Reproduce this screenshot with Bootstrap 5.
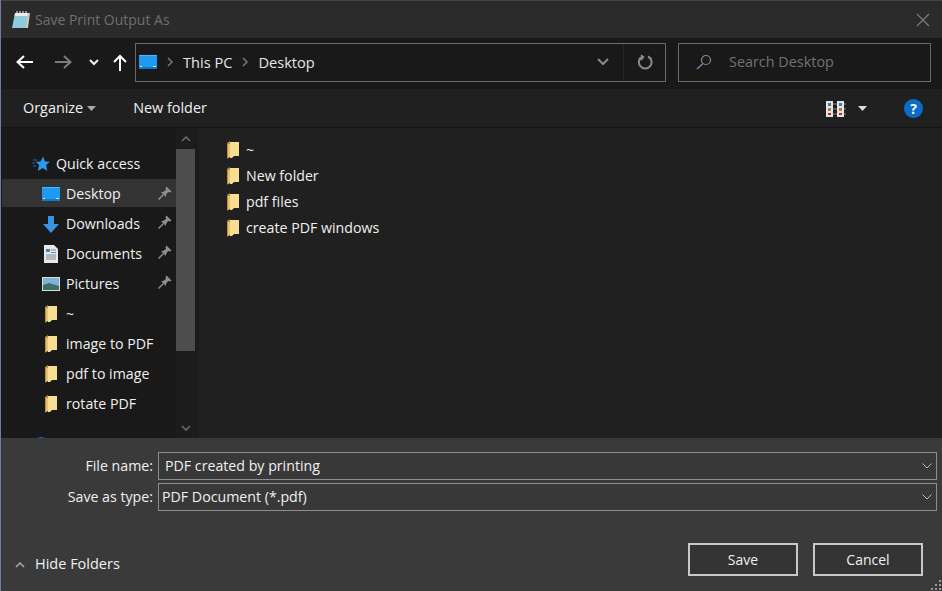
<!DOCTYPE html>
<html lang="en">
<head>
<meta charset="UTF-8">
<title>Save Print Output As</title>
<link href="https://cdn.jsdelivr.net/npm/bootstrap@5.3.3/dist/css/bootstrap.min.css" rel="stylesheet">
<style>
html, body { height: 591px; overflow: hidden; }
body { background: #3a3a3a; color: #f0f0f0; font-family: "Open Sans", "Noto Sans", sans-serif; font-size: 14.2px; line-height: 1; }
svg { display: block; flex: none; }
.dlg { height: 591px; border-left: 1px solid #6f7d9e; }
.titlebar { height: 38px; background: #2b2b2b; padding: 0 12px 0 10px; color: #6f6f6f; border-top: 1px solid #444; font-size: 14px; }
.addrbar { height: 51px; background: #191919; padding: 0 10px 3px 15px; }
.nav-fwd { margin-left: 22px; }
.nav-rec { margin-left: 17px; }
.nav-up { margin-left: 14px; }
.addrbox { width: 531px; height: 39px; margin-left: 8px; border: 1px solid #6a6a6a; padding-left: 3px; color: #e6e6e6; font-size: 14.6px; }
.crumbsep { margin: 0 9px 0 10px; }
.addrdrop { margin-right: 14px; }
.searchbox { width: 253px; height: 39px; margin-left: 12px; border: 1px solid #6a6a6a; padding-left: 17px; color: #6f7378; font-size: 14.4px; gap: 17px; }
.refresh { width: 42px; height: 100%; border-left: 1px solid #262626; }
.toolbar { height: 39px; background: #202020; padding: 1px 19px 0 22px; border-bottom: 1px solid #141414; font-size: 14.4px; }
.newfolder { margin-left: 37px; }
.viewcaret { margin-left: 12px; }
.mainpane { height: 310px; }
.sidebar { width: 175px; background: #191919; padding-top: 20px; overflow: hidden; }
.navrow { height: 30px; padding: 2px 0 0 39px; gap: 5px; margin-left: 1px; position: relative; }
.navrow.active { background: #333; height: 28px; margin: 1px 0 1px 1px; }
.navrow.headrow { padding-left: 30px; gap: 6px; }
.navrow.cliprow { padding-left: 31px; gap: 10px; margin-top: 8px; align-items: flex-start !important; }
.cliprow svg { margin-top: 8px; }
.cliprow span { margin-top: 10px; }
.navicon { width: 20px; }
.pin { position: absolute; left: 156px; top: 7px; }
.sbar { width: 19px; background: #1c1c1c; }
.sbar-thumb { height: 202px; background: #4d4d4d; }
.sbar-btn { height: 21px; }
.sbar-track { height: 268px; }
.split { width: 4px; background: #1c1c1c; }
.filepane { background: #202020; padding: 9px 0 0 28px; }
.filerow { height: 26px; gap: 7px; }
.bottombar { height: 153px; background: #3a3a3a; padding-top: 14px; }
.fieldrow { height: 28px; margin-bottom: 3px; }
.fieldlbl { width: 157px; text-align: right; padding-right: 5px; }
.combo { width: 779px; height: 28px; border: 1px solid #8e8e8e; background: #383838; padding: 0 4px 0 3px; }
.combo.inset { padding-left: 6px; }
.footbar { margin-top: 32px; padding: 0 19px 0 14px; font-size: 14.5px; }
.footbar > svg { margin-top: 10px; }
.hidelbl { margin: 10px 0 0 10px; }
.dlgbtn { width: 110px; height: 33px; background: #333; border: 2px solid #c8c8c8; border-radius: 0; color: #f0f0f0; font-size: 14px; padding: 0; }
.dlgbtn + .dlgbtn { margin-left: 15px; }
.grip { position: absolute; right: 1px; bottom: 1px; }
.helpdot { width: 19px; height: 19px; margin-left: 37px; border-radius: 50%; background: #0a6cc8; color: #fff; font-weight: 700; font-size: 14px; }
</style>
</head>
<body>
<svg width="0" height="0" class="position-absolute">
  <symbol id="ico-folder" viewBox="0 0 12 18"><path d="M0 2l3-2v15l-3 3z" fill="#b98f3e"/><path d="M3 1h9v14H7l-2 2H3z" fill="#f8dd92"/><path d="M1 3h2v13l-2 1z" fill="#e9c26a"/></symbol>
  <symbol id="ico-pin" viewBox="0 0 14 14"><path d="M8.500.500l5 5-1.500 1-2-.500-2 3v2l-5-5h2l3-2-.5-2z" fill="#8f8f8f"/><path d="M5.500 8.500l-5 5" stroke="#8f8f8f" stroke-width="1.400"/></symbol>
  <symbol id="ico-desk" viewBox="0 0 18 14"><rect width="18" height="14" fill="#1e9bf0"/><rect y="0" width="18" height="1" fill="#4fb4f5"/><path d="M1 11.500h2M14 11.500h3" stroke="#d5eefc"/><rect y="12" width="18" height="2" fill="#127ac4"/></symbol>
</svg>
<div class="dlg d-flex flex-column position-relative">

  <div class="titlebar d-flex align-items-center justify-content-between">
    <div class="d-flex align-items-center gap-1">
      <svg width="20" height="20" viewBox="0 0 20 20"><path d="M5 3h14l-2 15H2z" fill="#d9c9a8"/><path d="M4 3h13l-2 15H1z" fill="#8fcbdd"/><path d="M4 3h13l-.4 3H3.600z" fill="#e6ecea"/><path d="M6 1v4M9 1v4M12 1v4M15 1v4" stroke="#f4f4f4"/></svg>
      <span>Save Print Output As</span>
    </div>
    <svg width="14" height="14" viewBox="0 0 14 14"><path d="M1 1l12 12M13 1L1 13" stroke="#7d7d7d" stroke-width="1.200"/></svg>
  </div>

  <div class="addrbar d-flex align-items-center">
    <svg width="17" height="14" viewBox="0 0 17 14"><path d="M1 7h16M8 1L1.500 7 8 13" fill="none" stroke="#fff" stroke-width="2"/></svg>
    <svg class="nav-fwd" width="17" height="14" viewBox="0 0 17 14"><path d="M0 7h16M9 1l6.500 6L9 13" fill="none" stroke="#7c7c7c" stroke-width="2"/></svg>
    <svg class="nav-rec" width="10" height="7" viewBox="0 0 10 7"><path d="M1 1l4 4 4-4" fill="none" stroke="#eee" stroke-width="2"/></svg>
    <svg class="nav-up" width="14" height="17" viewBox="0 0 14 17"><path d="M7 17V2M1 8l6-6 6 6" fill="none" stroke="#fff" stroke-width="2"/></svg>
    <div class="addrbox d-flex align-items-center">
      <svg width="18" height="14"><use href="#ico-desk"/></svg>
      <svg class="crumbsep" width="7" height="10" viewBox="0 0 7 10"><path d="M1 1l4 4-4 4" fill="none" stroke="#777" stroke-width="1.500"/></svg>
      <span>This PC</span>
      <svg class="crumbsep" width="7" height="10" viewBox="0 0 7 10"><path d="M1 1l4 4-4 4" fill="none" stroke="#777" stroke-width="1.500"/></svg>
      <span>Desktop</span>
      <svg class="ms-auto addrdrop" width="12" height="8" viewBox="0 0 12 8"><path d="M1 1l5 5 5-5" fill="none" stroke="#8a8a8a" stroke-width="2"/></svg>
      <div class="refresh d-flex align-items-center justify-content-center">
        <svg width="16" height="16" viewBox="0 0 16 16"><path d="M5.500 2.500a6.300 6.300 0 1 0 5.500 0" fill="none" stroke="#8a8a8a" stroke-width="2"/><path d="M4 1l2.500 2L4 6" fill="none" stroke="#8a8a8a" stroke-width="1.600"/></svg>
      </div>
    </div>
    <div class="searchbox d-flex align-items-center">
      <svg width="16" height="16" viewBox="0 0 16 16"><circle cx="10" cy="6" r="4.500" fill="none" stroke="#8a8a8a" stroke-width="1.200"/><path d="M7 9.500L1 15" stroke="#6f8aa8" stroke-width="1.400"/></svg>
      <span>Search Desktop</span>
    </div>
  </div>

  <div class="toolbar d-flex align-items-center">
    <span>Organize</span>
    <svg class="ms-1" width="9" height="5" viewBox="0 0 9 5"><path d="M0 0h9L4.500 5z" fill="#aaa"/></svg>
    <span class="newfolder">New folder</span>
    <svg class="ms-auto" width="20" height="16" viewBox="0 0 20 16">
      <rect x="0" y="0" width="7" height="16" fill="#e4e4e4"/><rect x="11" y="0" width="7" height="16" fill="#e4e4e4"/>
      <rect x="2" y="2" width="3" height="3" fill="#3a7ca8"/><rect x="2" y="7" width="3" height="3" fill="#a8803a"/><rect x="2" y="12" width="3" height="2" fill="#b03020"/>
      <rect x="13" y="2" width="3" height="3" fill="#3a7ca8"/><rect x="13" y="7" width="3" height="3" fill="#a8803a"/><rect x="13" y="12" width="3" height="2" fill="#b03020"/>
      <path d="M7 3h4M7 8h4M7 13h4M18 3h2M18 8h2M18 13h2" stroke="#888"/>
    </svg>
    <svg class="viewcaret" width="9" height="5" viewBox="0 0 9 5"><path d="M0 0h9L4.500 5z" fill="#ddd"/></svg>
    <div class="helpdot d-flex align-items-center justify-content-center">?</div>
  </div>

  <div class="mainpane d-flex">
    <div class="sidebar">
      <div class="navrow headrow d-flex align-items-center">
        <svg width="18" height="16" viewBox="0 0 18 16"><path d="M11 .500l1.900 4.900 5 .4-3.800 3.200 1.200 6-4.500-3-5 3 1.400-6-3.500-3.200 5-.4z" fill="#2a9cf0"/><path d="M1 4h4M0 7h3M1 10h3" stroke="#1a6cb0"/></svg>
        <span>Quick access</span>
      </div>
      <div class="navrow active d-flex align-items-center">
        <svg class="navicon" width="18" height="14"><use href="#ico-desk"/></svg>
        <span>Desktop</span>
        <svg class="pin" width="14" height="14"><use href="#ico-pin"/></svg>
      </div>
      <div class="navrow d-flex align-items-center">
        <svg class="navicon" width="18" height="17" viewBox="0 0 18 17"><path d="M6 0h6v8h5l-8 9-8-9h5z" fill="#3a92e4"/></svg>
        <span>Downloads</span>
        <svg class="pin" width="14" height="14"><use href="#ico-pin"/></svg>
      </div>
      <div class="navrow d-flex align-items-center">
        <svg class="navicon" width="14" height="18" viewBox="0 0 14 18"><path d="M0 0h10l4 4v14H0z" fill="#e8e8e8"/><path d="M2 4h4v3H2z" fill="#3a86c8"/><path d="M7 5h5M7 7.500h5M2 10h10M2 12h10M2 14h10" stroke="#7a8a9a"/></svg>
        <span>Documents</span>
        <svg class="pin" width="14" height="14"><use href="#ico-pin"/></svg>
      </div>
      <div class="navrow d-flex align-items-center">
        <svg class="navicon" width="18" height="14" viewBox="0 0 18 14"><rect width="18" height="14" fill="#dcdcdc"/><rect x="1" y="1" width="16" height="12" fill="#7fb2d6"/><path d="M1 8l6-2 10 3v4H1z" fill="#3d6f66"/></svg>
        <span>Pictures</span>
        <svg class="pin" width="14" height="14"><use href="#ico-pin"/></svg>
      </div>
      <div class="navrow d-flex align-items-center"><svg class="navicon" width="12" height="18"><use href="#ico-folder"/></svg><span>~</span></div>
      <div class="navrow d-flex align-items-center"><svg class="navicon" width="12" height="18"><use href="#ico-folder"/></svg><span>image to PDF</span></div>
      <div class="navrow d-flex align-items-center"><svg class="navicon" width="12" height="18"><use href="#ico-folder"/></svg><span>pdf to image</span></div>
      <div class="navrow d-flex align-items-center"><svg class="navicon" width="12" height="18"><use href="#ico-folder"/></svg><span>rotate PDF</span></div>
      <div class="navrow cliprow d-flex">
        <svg width="16" height="16" viewBox="0 0 16 16"><circle cx="8" cy="8" r="7" fill="#0a6cc8"/></svg>
        <span>Sea Folders</span>
      </div>
    </div>
    <div class="sbar d-flex flex-column">
      <div class="sbar-btn d-flex align-items-center justify-content-center"><svg width="10" height="6" viewBox="0 0 10 6"><path d="M1 5l4-4 4 4" fill="none" stroke="#6e6e6e" stroke-width="1.500"/></svg></div>
      <div class="sbar-track"><div class="sbar-thumb"></div></div>
      <div class="sbar-btn d-flex align-items-center justify-content-center"><svg width="10" height="6" viewBox="0 0 10 6"><path d="M1 1l4 4 4-4" fill="none" stroke="#6e6e6e" stroke-width="1.500"/></svg></div>
    </div>
    <div class="split"></div>
    <div class="filepane flex-grow-1">
      <div class="filerow d-flex align-items-center"><svg width="12" height="18"><use href="#ico-folder"/></svg><span>~</span></div>
      <div class="filerow d-flex align-items-center"><svg width="12" height="18"><use href="#ico-folder"/></svg><span>New folder</span></div>
      <div class="filerow d-flex align-items-center"><svg width="12" height="18"><use href="#ico-folder"/></svg><span>pdf files</span></div>
      <div class="filerow d-flex align-items-center"><svg width="12" height="18"><use href="#ico-folder"/></svg><span>create PDF windows</span></div>
    </div>
  </div>

  <div class="bottombar">
    <div class="fieldrow d-flex align-items-center">
      <div class="fieldlbl">File name:</div>
      <div class="combo inset d-flex align-items-center justify-content-between">
        <span>PDF created by printing</span>
        <svg width="10" height="6" viewBox="0 0 10 6"><path d="M.5.500l4.500 4.500 4.500-4.500" fill="none" stroke="#bbb"/></svg>
      </div>
    </div>
    <div class="fieldrow d-flex align-items-center">
      <div class="fieldlbl">Save as type:</div>
      <div class="combo d-flex align-items-center justify-content-between">
        <span>PDF Document (*.pdf)</span>
        <svg width="10" height="6" viewBox="0 0 10 6"><path d="M.5.500l4.500 4.500 4.500-4.500" fill="none" stroke="#bbb"/></svg>
      </div>
    </div>
    <div class="footbar d-flex align-items-center">
      <svg width="10" height="6" viewBox="0 0 10 6"><path d="M1 5l4-4 4 4" fill="none" stroke="#aaa" stroke-width="1.500"/></svg>
      <span class="hidelbl">Hide Folders</span>
      <button type="button" class="btn dlgbtn ms-auto">Save</button>
      <button type="button" class="btn dlgbtn">Cancel</button>
    </div>
  </div>

  <svg class="grip" width="10" height="10" viewBox="0 0 10 10"><path d="M8 0h2v2H8zM4 4h2v2H4zM8 4h2v2H8zM0 8h2v2H0zM4 8h2v2H4zM8 8h2v2H8z" fill="#999"/></svg>
</div>
</body>
</html>
